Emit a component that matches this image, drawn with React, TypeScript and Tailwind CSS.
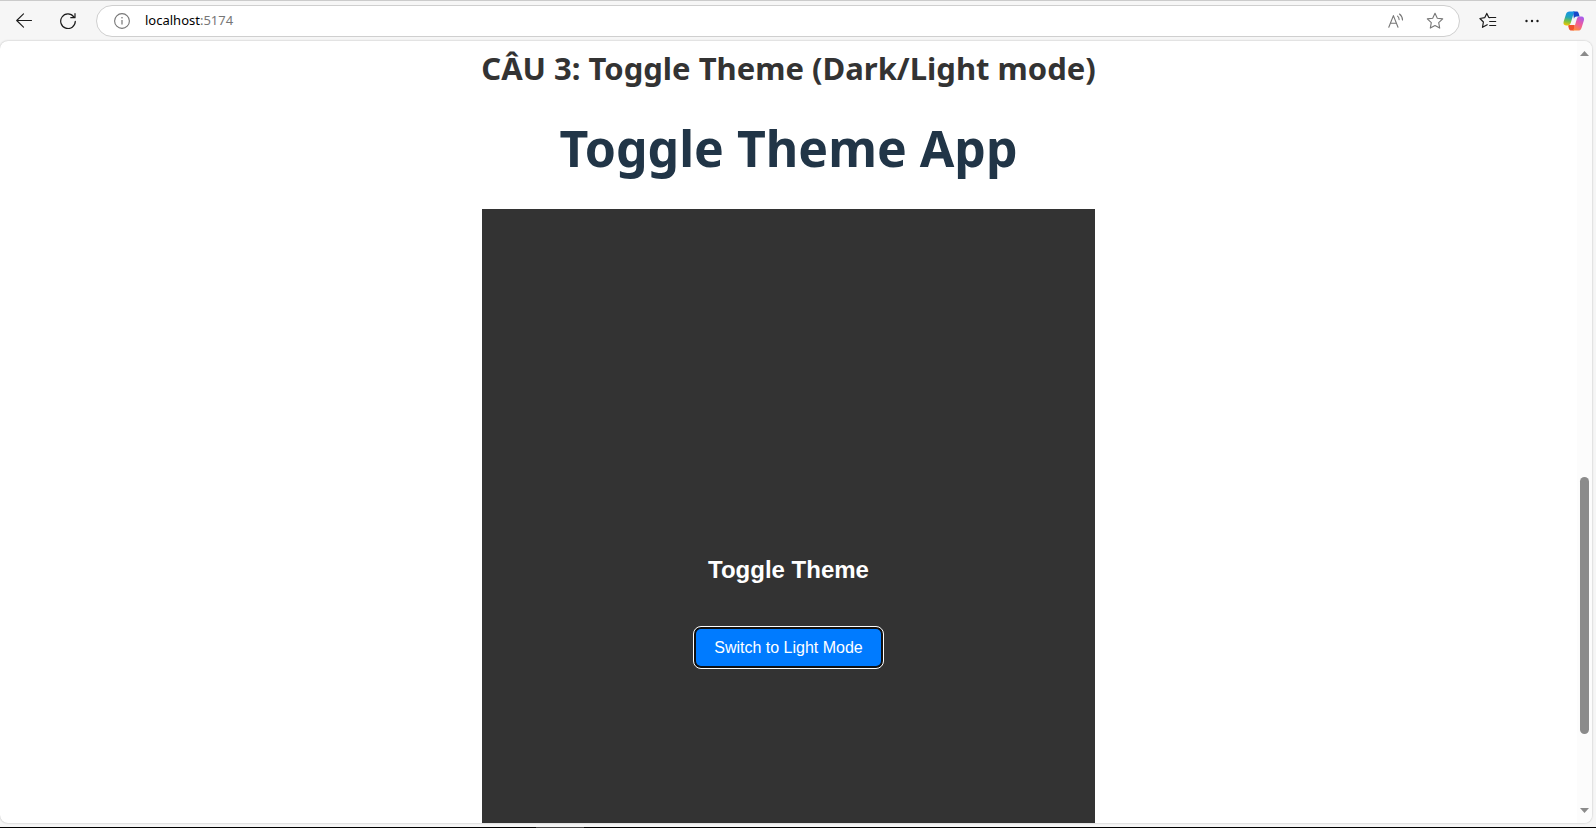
import { useState } from 'react';

function BackIcon() {
  return (
    <svg width="16" height="16" viewBox="0 0 16 16" fill="none" stroke="#1b1b1b" strokeWidth="1.1" strokeLinecap="round" strokeLinejoin="round" aria-hidden="true">
      <path d="M15.500 7.500H.7M7.500.9L.7 7.500l6.800 6.700" />
    </svg>
  );
}

function ReloadIcon() {
  return (
    <svg width="16" height="16" viewBox="0 0 16 16" fill="none" stroke="#1b1b1b" strokeWidth="1.200" strokeLinecap="round" strokeLinejoin="round" aria-hidden="true">
      <path d="M15.300 8.300A7.300 7.300 0 1 1 13.800 3.800M15 .7v4h-4.200" />
    </svg>
  );
}

function InfoIcon() {
  return (
    <svg width="16" height="16" viewBox="0 0 16 16" fill="none" aria-hidden="true">
      <circle cx="8" cy="8" r="7.400" stroke="#767676" strokeWidth="1.1" />
      <path d="M8 7v4.500" stroke="#767676" strokeWidth="1.200" />
      <circle cx="8" cy="4.800" r=".8" fill="#767676" />
    </svg>
  );
}

function ReadAloudIcon() {
  return (
    <svg width="16" height="16" viewBox="0 0 16 16" fill="none" stroke="#767676" strokeWidth="1.1" strokeLinecap="round" strokeLinejoin="round" aria-hidden="true">
      <path d="M.8 14.200L5.400 2.600l4.600 11.600M2.300 10.200h6.200M9.600 3.200c1 .9 1.500 2 1.500 3.400M11.500 1c2 1.600 3 3.600 3 6" />
    </svg>
  );
}

function StarIcon() {
  return (
    <svg width="18" height="18" viewBox="0 0 18 18" fill="none" stroke="#767676" strokeWidth="1.1" strokeLinejoin="round" aria-hidden="true">
      <path d="M9 1.300l2.300 4.900 5.400.7-4 3.800 1 5.400L9 13.500l-4.700 2.600 1-5.400-4-3.800 5.400-.7z" />
    </svg>
  );
}

function FavoritesIcon() {
  return (
    <svg width="18" height="18" viewBox="0 0 18 18" fill="none" stroke="#1b1b1b" strokeWidth="1.200" strokeLinecap="round" strokeLinejoin="round" aria-hidden="true">
      <path d="M10.700 5.600l-.9-.1L7.800 1.400 5.700 5.700.9 6.500l3.500 3.500-.9 5.300 4.700-2.600M10.700 5.500h6M10.700 9.500h6M10.700 13.500h6" />
    </svg>
  );
}

function MoreIcon() {
  return (
    <svg width="14" height="4" viewBox="0 0 14 4" fill="#1b1b1b" aria-hidden="true">
      <circle cx="1.500" cy="2" r="1.200" />
      <circle cx="7" cy="2" r="1.200" />
      <circle cx="12.500" cy="2" r="1.200" />
    </svg>
  );
}

function CopilotIcon() {
  return (
    <svg width="22" height="20" viewBox="0.500 0 23.500 22" aria-hidden="true">
      <defs>
        <linearGradient id="cool" x1="0.4" y1="0" x2="0.25" y2="1">
          <stop offset="0" stopColor="#1691e8" />
          <stop offset=".4" stopColor="#22a6b8" />
          <stop offset=".7" stopColor="#7cc142" />
          <stop offset="1" stopColor="#f5c400" />
        </linearGradient>
        <linearGradient id="warm" x1="0.8" y1="0" x2="0.3" y2="1">
          <stop offset="0" stopColor="#a45cf0" />
          <stop offset=".5" stopColor="#ee5a9d" />
          <stop offset="1" stopColor="#ff8a3c" />
        </linearGradient>
      </defs>
      <path d="M11 .5h4.300c1 0 1.700.7 2 1.700l1.100 3.900h-3.200c-1.500 0-2.500.8-3 2.300z" fill="#1747c9" />
      <path d="M13 15.500h-6l-1.300.5 1 3.500c.4 1.300 1.200 2 2.500 2h1.600c1.300 0 2-.7 2.400-2z" fill="#f0502c" />
      <path d="M7.300.5h6.500c-1.200.3-1.700 1.100-2.100 2.500L8.900 12.500c-.6 2.200-1.600 3.400-3.300 3.400H3.500C1 15.900.2 14 .9 11.600L3.400 3.700C4.100 1.500 5.200.5 7.300.5z" fill="url(#cool)" />
      <path d="M16.700 21.500h-6.500c1.200-.3 1.700-1.100 2.100-2.500l2.800-9.500c.6-2.200 1.600-3.400 3.300-3.400h2.100c2.500 0 3.300 1.900 2.600 4.300l-2.500 7.900c-.7 2.200-1.800 3.200-3.900 3.200z" fill="url(#warm)" />
    </svg>
  );
}

function Toolbar() {
  return (
    <header className="flex h-10 shrink-0 items-center pr-[11px] pl-4">
      <button type="button" aria-label="Back" className="mr-7">
        <BackIcon />
      </button>
      <button type="button" aria-label="Refresh" className="mr-5">
        <ReloadIcon />
      </button>
      <div className="flex h-8 min-w-0 flex-1 items-center rounded-full border border-[#cfcfcf] bg-white pr-[15px] pl-[17px]">
        <button type="button" aria-label="View site information">
          <InfoIcon />
        </button>
        <a href="http://localhost:5174" className="ml-[15px] font-['Noto_Sans',sans-serif] text-[13px] text-black">
          localhost<span className="text-[#767676]">:5174</span>
        </a>
        <button type="button" aria-label="Read aloud" className="mr-[22px] ml-auto">
          <ReadAloudIcon />
        </button>
        <button type="button" aria-label="Add to favorites">
          <StarIcon />
        </button>
      </div>
      <button type="button" aria-label="Favorites" className="ml-[19px]">
        <FavoritesIcon />
      </button>
      <button type="button" aria-label="Settings and more" className="ml-7">
        <MoreIcon />
      </button>
      <button type="button" aria-label="Copilot" className="ml-6">
        <CopilotIcon />
      </button>
    </header>
  );
}

function Scrollbar() {
  return (
    <div className="flex w-[15px] shrink-0 flex-col items-center bg-[#fcfcfc] py-2.5" aria-hidden="true">
      <svg width="9" height="5" viewBox="0 0 9 5" fill="#8b8b8b">
        <path d="M0 5L4.500 0 9 5z" />
      </svg>
      <div className="flex-[421]" />
      <div className="w-[9px] flex-[257] rounded-full bg-[#8b8b8b]" />
      <div className="flex-[74]" />
      <svg width="9" height="5" viewBox="0 0 9 5" fill="#8b8b8b">
        <path d="M0 0h9L4.500 5z" />
      </svg>
    </div>
  );
}

function ToggleTheme() {
  const [dark, setDark] = useState(true);
  return (
    <section
      className={`flex h-screen w-full shrink-0 flex-col items-center justify-center gap-[43px] pb-[27px] font-['Liberation_Sans',sans-serif] ${
        dark ? 'bg-[#333333] text-white' : 'bg-white text-[#333333]'
      }`}
    >
      <h3 className="text-2xl font-bold">Toggle Theme</h3>
      <button
        type="button"
        onClick={() => setDark(!dark)}
        className="rounded-[5px] bg-[#007bff] px-[18px] py-2 text-base leading-[21px] font-normal text-white ring-2 ring-[#101010] outline outline-offset-2 outline-white"
      >
        {dark ? 'Switch to Light Mode' : 'Switch to Dark Mode'}
      </button>
    </section>
  );
}

export default function App() {
  return (
    <div className="flex h-screen flex-col overflow-hidden border-t border-[#cbcbcb] bg-[#f6f6f6]">
      <Toolbar />
      <div className="mr-1 flex min-h-0 flex-1 overflow-hidden rounded-lg bg-white shadow-[0_0_2px_#b0b0b0]">
        <main className="flex min-w-0 flex-1 flex-col items-center overflow-hidden">
          <div className="flex w-[613px] max-w-full flex-col items-center font-['Noto_Sans',sans-serif]">
            <h2 className="mt-1 text-[31px] leading-[46px] font-bold whitespace-nowrap text-[#333333]">CÂU 3: Toggle Theme (Dark/Light mode)</h2>
            <h1 className="mt-[25px] mb-[29px] text-[50px] leading-16 font-bold whitespace-nowrap text-[#213547]">Toggle Theme App</h1>
            <ToggleTheme />
          </div>
        </main>
        <Scrollbar />
      </div>
      <footer className="mt-1 flex h-px shrink-0 bg-black">
        <div className="ml-[536px] w-12 bg-[#444444]" />
      </footer>
    </div>
  );
}
